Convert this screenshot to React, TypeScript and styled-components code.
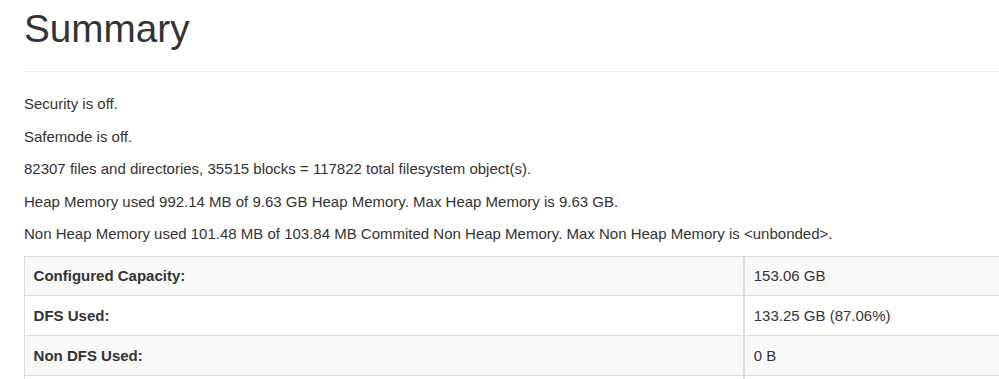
import React from 'react';
import styled, { createGlobalStyle } from 'styled-components';

const GlobalStyle = createGlobalStyle`
  html, body {
    margin: 0;
    padding: 0;
    background: #fff;
    overflow: hidden;
  }
  body {
    font-family: 'Liberation Sans', Arial, sans-serif;
    font-size: 15px;
    color: #333;
  }
`;

const Page = styled.div`
  width: 1200px;
  padding-left: 24px;
`;

const PageHeader = styled.div`
  border-bottom: 1px solid #eee;
  padding-bottom: 10px;
`;

const Title = styled.h1`
  margin: 7.5px 0 10.75px;
  font-size: 38.7px;
  font-weight: 400;
  line-height: 42.6px;
  color: #333;
`;

const Info = styled.div`
  padding-top: 21.5px;
`;

const Line = styled.p`
  margin: 0 0 11px;
  line-height: 21.5px;
`;

const Table = styled.table`
  border-collapse: collapse;
  border-spacing: 0;
  width: 1100px;
  border: 1px solid #ddd;
`;

const Row = styled.tr<{ $striped?: boolean }>`
  background: ${(p) => (p.$striped ? '#f9f9f9' : '#fff')};
`;

const HeadCell = styled.th`
  width: 701px;
  text-align: left;
  font-weight: 700;
  padding: 8.6px;
  line-height: 21.4px;
  border: 1px solid #ddd;
  border-right-width: 2px;
`;

const Cell = styled.td`
  padding: 8.6px;
  line-height: 21.4px;
  border: 1px solid #ddd;
`;

const lines = [
  'Security is off.',
  'Safemode is off.',
  '82307 files and directories, 35515 blocks = 117822 total filesystem object(s).',
  'Heap Memory used 992.14 MB of 9.63 GB Heap Memory. Max Heap Memory is 9.63 GB.',
  'Non Heap Memory used 101.48 MB of 103.84 MB Commited Non Heap Memory. Max Non Heap Memory is <unbonded>.',
];

const rows = [
  ['Configured Capacity:', '153.06 GB'],
  ['DFS Used:', '133.25 GB (87.06%)'],
  ['Non DFS Used:', '0 B'],
  ['DFS Remaining:', '19.81 GB (12.94%)'],
];

export default function App() {
  return (
    <>
      <GlobalStyle />
      <Page>
        <PageHeader>
          <Title>Summary</Title>
        </PageHeader>
        <Info>
          {lines.map((l) => (
            <Line key={l}>{l}</Line>
          ))}
        </Info>
        <Table>
          <tbody>
            {rows.map(([k, v], i) => (
              <Row key={k} $striped={i % 2 === 0}>
                <HeadCell>{k}</HeadCell>
                <Cell>{v}</Cell>
              </Row>
            ))}
          </tbody>
        </Table>
      </Page>
    </>
  );
}
